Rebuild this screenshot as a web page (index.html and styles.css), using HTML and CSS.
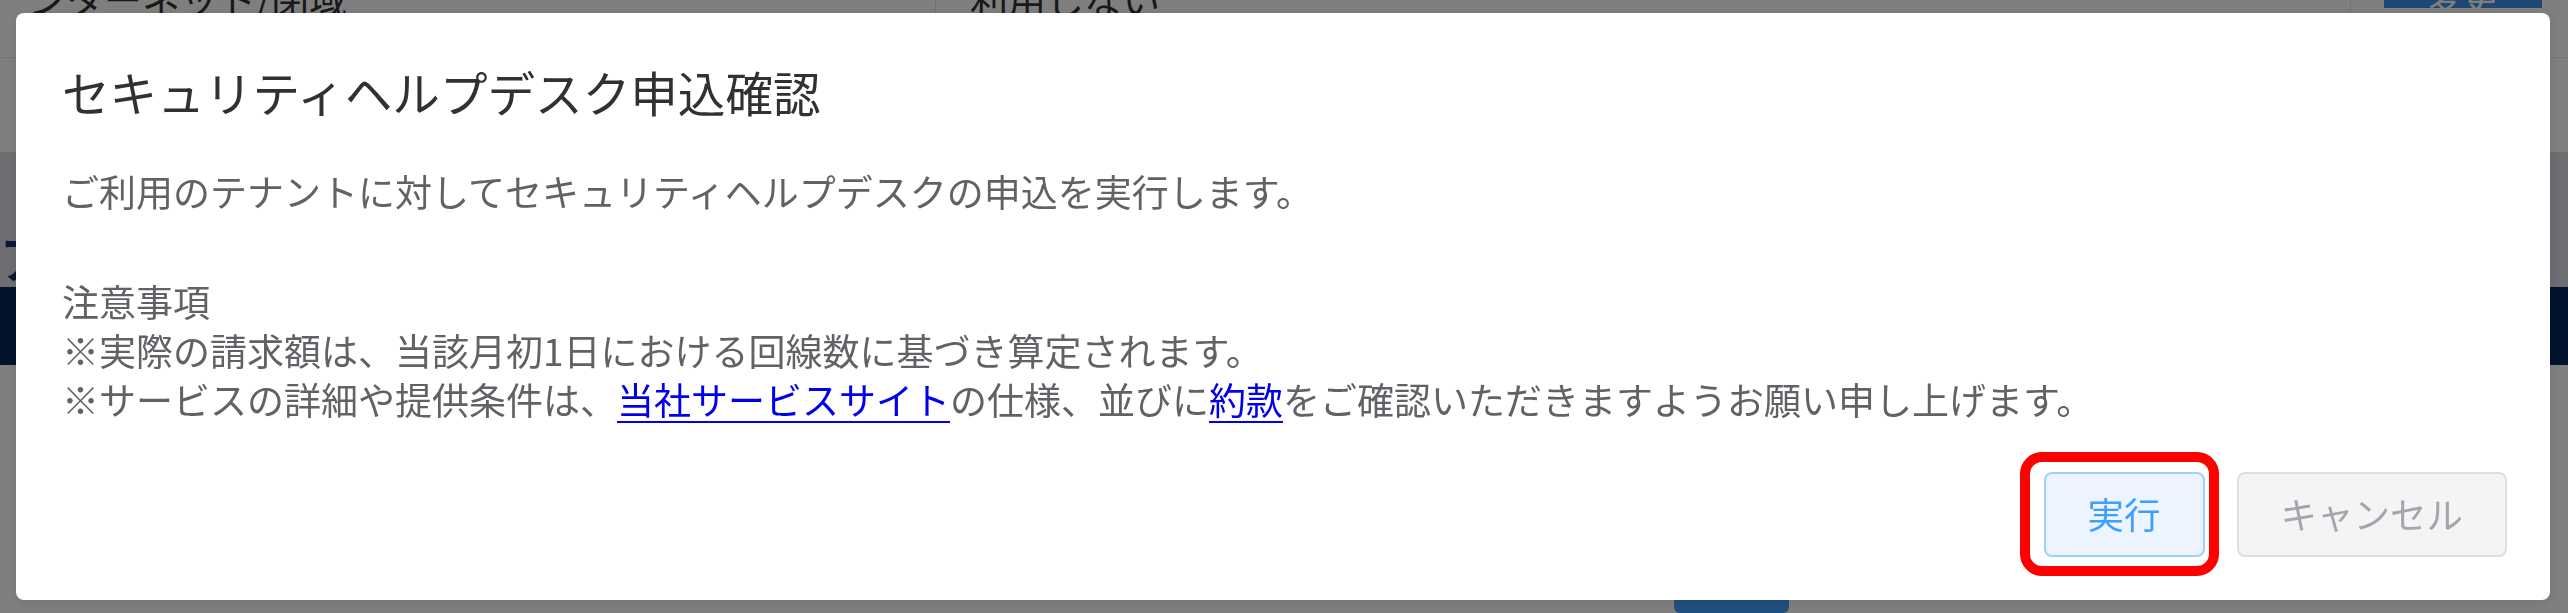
FILE: index.html
```html
<!DOCTYPE html>
<html lang="ja">
<head>
<meta charset="utf-8">
<title>セキュリティヘルプデスク申込確認</title>
<link rel="stylesheet" href="styles.css">
</head>
<body>
<div class="page">
  <div class="table-row">
    <div class="cell cell-name"><span class="cell-text">ンターネット/閉域</span></div>
    <div class="cell cell-value"><span class="cell-text">利用しない</span></div>
    <div class="cell cell-action"><span class="page-btn">変更</span></div>
  </div>
  <div class="gap-area"></div>
  <div class="section-band"><span class="section-heading">ア</span></div>
  <div class="navy-band"></div>
  <div class="page-footer"><span class="footer-btn">戻る</span></div>
</div>

<div class="overlay">
  <div class="dialog" role="dialog" aria-modal="true">
    <div class="dialog-header">
      <span class="dialog-title">セキュリティヘルプデスク申込確認</span>
    </div>
    <div class="dialog-content">
      <p class="msg">ご利用のテナントに対してセキュリティヘルプデスクの申込を実行します。</p>
      <div class="notes">
        <p class="note-line">注意事項</p>
        <p class="note-line">※実際の請求額は、当該月初1日における回線数に基づき算定されます。</p>
        <p class="note-line">※サービスの詳細や提供条件は、<a href="#" class="link">当社サービスサイト</a>の仕様、並びに<a href="#" class="link">約款</a>をご確認いただきますようお願い申し上げます。</p>
      </div>
    </div>
    <div class="dialog-btns">
      <span class="highlight-wrap">
        <button class="btn btn-primary" type="button">実行</button>
        <span class="highlight" aria-hidden="true"></span>
      </span>
      <button class="btn btn-disabled" type="button" disabled>キャンセル</button>
    </div>
  </div>
</div>
</body>
</html>
```

FILE: styles.css
```css
html, body {
  margin: 0;
  padding: 0;
}

body {
  width: 2568px;
  height: 613px;
  overflow: hidden;
  background: #ffffff;
  font-family: "Noto Sans CJK JP", "Noto Sans", sans-serif;
}

/* ---------- underlying page ---------- */
.page {
  display: flex;
  flex-direction: column;
  height: 613px;
}

.table-row {
  display: flex;
  height: 58px;
  border-bottom: 1px solid #e8eaee;
  box-sizing: border-box;
}

.cell {
  box-sizing: border-box;
  height: 58px;
}

.cell-name {
  width: 935px;
  padding-left: 28px;
}

.cell-value {
  width: 1415px;
  padding-left: 34px;
  border-left: 1px solid #e4e7ed;
}

.cell-action {
  flex: 1;
  padding-left: 33px;
  border-left: 1px solid #e4e7ed;
}

.cell-text {
  display: block;
  margin-top: -22px;
  font-size: 38px;
  line-height: 40px;
  color: #303133;
}

.page-btn {
  display: block;
  width: 158px;
  height: 32px;
  margin-top: -24px;
  background: #3d8fe6;
  color: #ffffff;
  font-size: 36px;
  line-height: 40px;
  text-align: center;
}

.gap-area {
  height: 111px;
}

.section-band {
  height: 160px;
  background: #dadde4;
}

.section-heading {
  display: block;
  margin-top: 76px;
  font-size: 50px;
  line-height: 56px;
  font-weight: 700;
  color: #15306a;
}

.navy-band {
  height: 92px;
  background: #04255a;
}

.page-footer {
  flex: 1;
  display: flex;
  padding-left: 1674px;
}

.footer-btn {
  display: block;
  width: 115px;
  height: 70px;
  margin-top: 178px;
  background: #409eff;
  color: #ffffff;
  font-size: 30px;
  line-height: 70px;
  text-align: center;
  border-radius: 6px;
}

/* ---------- modal ---------- */
.overlay {
  position: fixed;
  inset: 0;
  background: rgba(0, 0, 0, 0.5);
  padding: 13px 18px 13px 16px;
  box-sizing: border-box;
  display: flex;
}

.dialog {
  flex: 1;
  display: flex;
  flex-direction: column;
  background: #ffffff;
  border-radius: 8px;
  box-shadow: 0 2px 12px rgba(0, 0, 0, 0.1);
  padding: 0 43px 43px 46px;
  box-sizing: border-box;
}

.dialog-header {
  padding-top: 49px;
}

.dialog-title {
  display: block;
  font-size: 47.6px;
  line-height: 60px;
  color: #303133;
}

.dialog-content {
  margin-top: 45px;
  font-size: 37px;
  color: #606266;
}

.msg {
  margin: 0;
  line-height: 49px;
}

.notes {
  margin-top: 61px;
}

.note-line {
  margin: 0;
  line-height: 49px;
}

.link {
  color: #0000ee;
  text-decoration: underline;
  text-underline-offset: 6px;
  text-decoration-thickness: 2px;
}

.dialog-btns {
  margin-top: auto;
  display: flex;
  justify-content: flex-end;
  gap: 32px;
}

.btn {
  height: 85px;
  padding: 0 42px;
  font-family: "Noto Sans CJK JP", "Noto Sans", sans-serif;
  font-size: 36.5px;
  line-height: 1;
  border-radius: 8px;
  box-sizing: border-box;
  margin: 0;
}

.btn-primary {
  background: #ecf5ff;
  border: 2px solid #a0cfff;
  color: #409eff;
}

.btn-disabled {
  background: #f4f4f5;
  border: 2px solid #dcdfe6;
  color: #a3a6ad;
}

.highlight-wrap {
  position: relative;
  display: flex;
}

.highlight {
  position: absolute;
  left: -24px;
  right: -14px;
  top: -20px;
  bottom: -19px;
  border: 10px solid #ff0000;
  border-radius: 22px;
  pointer-events: none;
}
```
